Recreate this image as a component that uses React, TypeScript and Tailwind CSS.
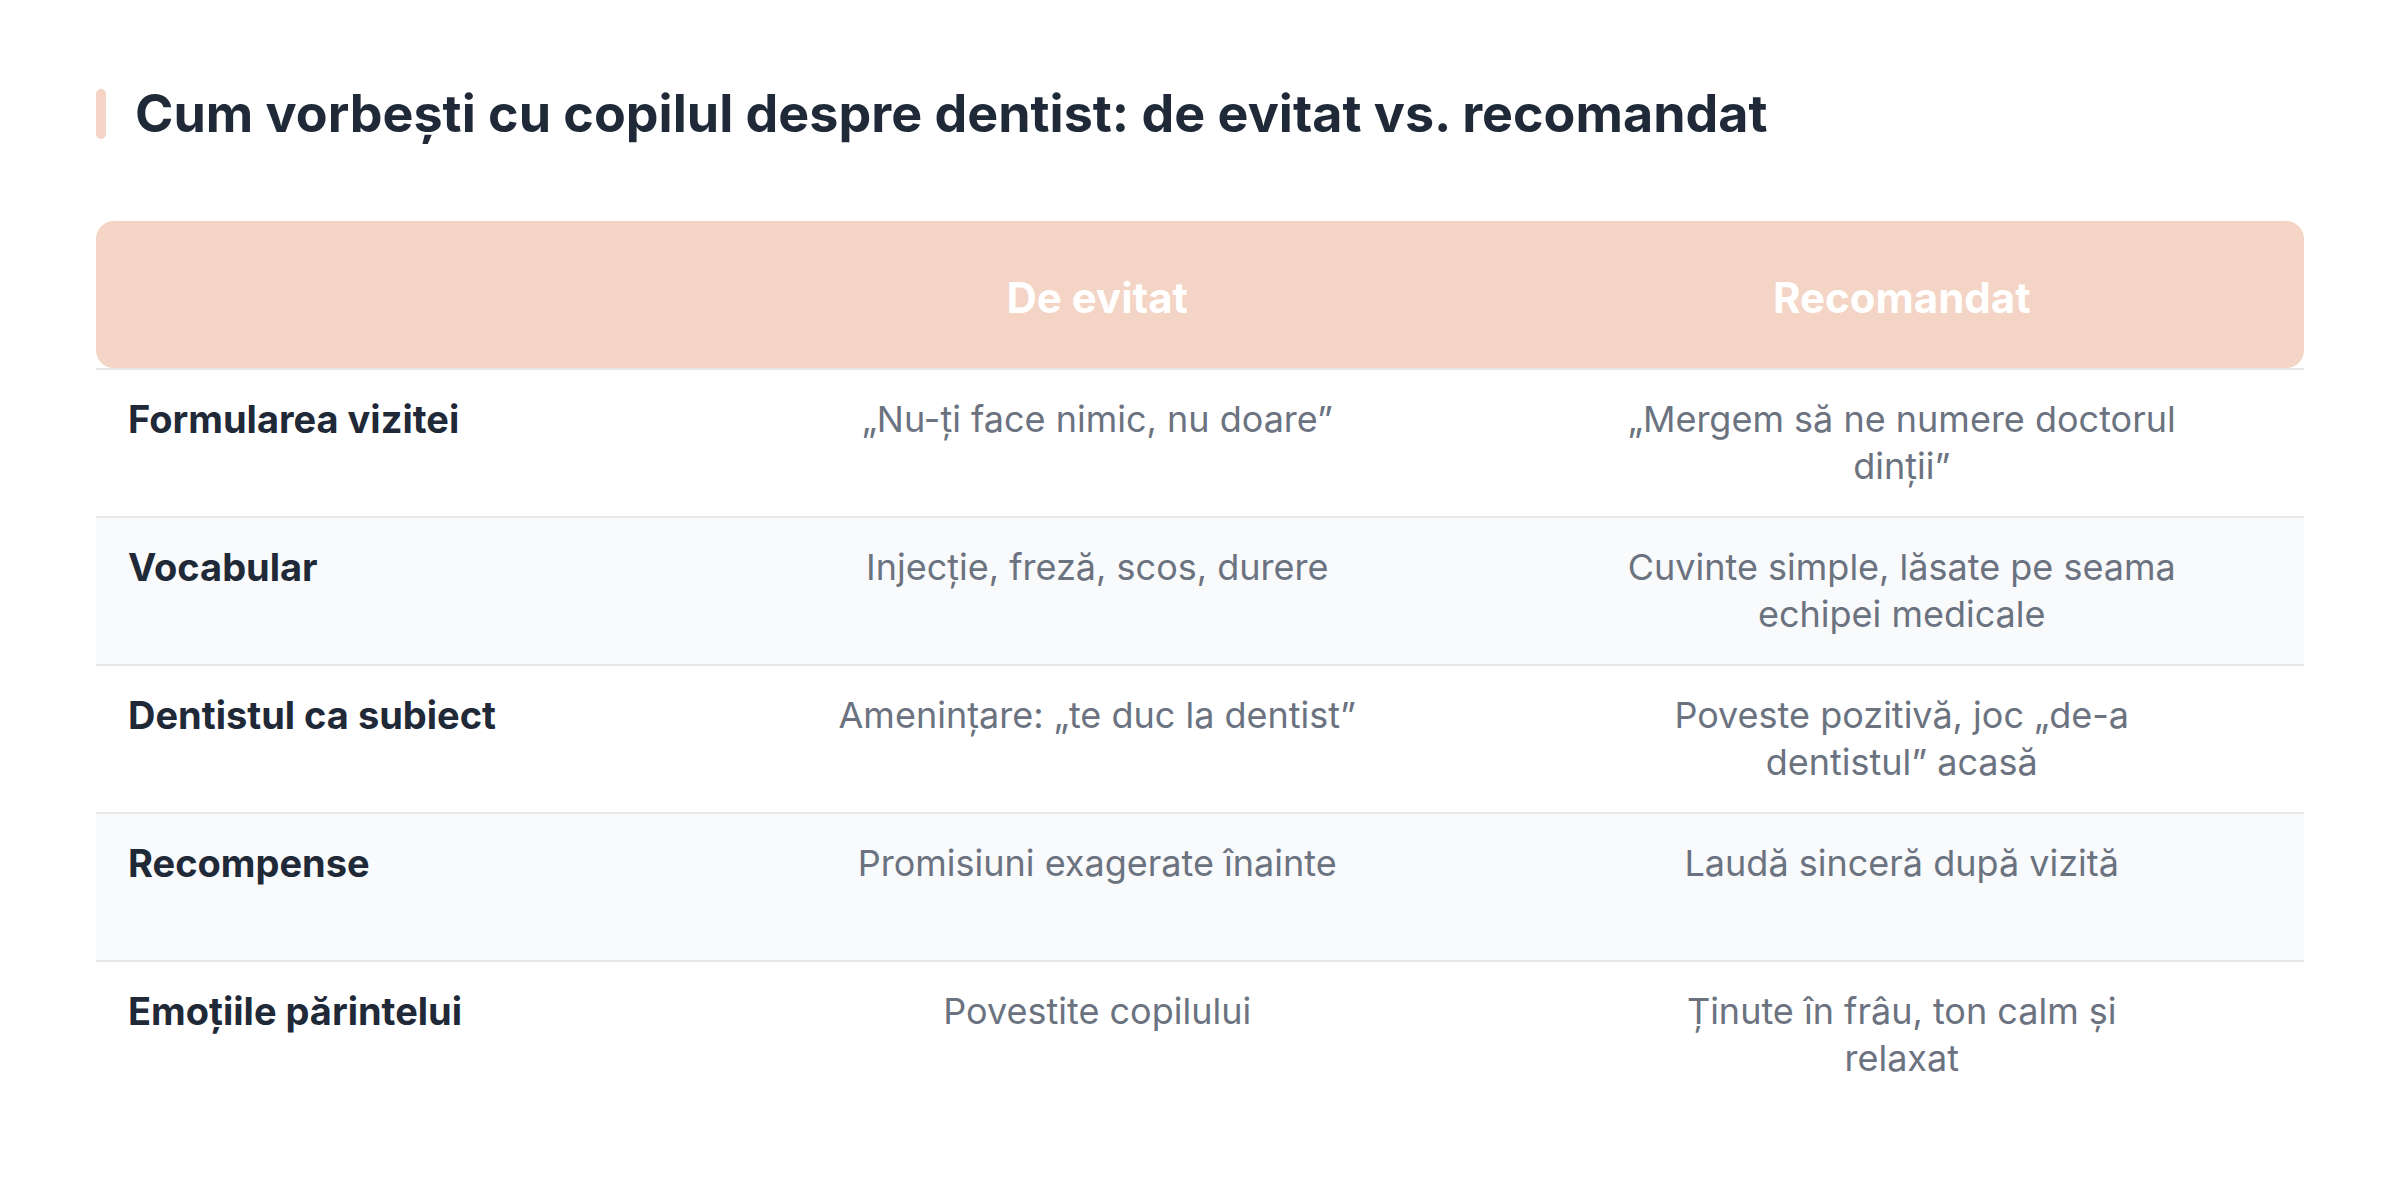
const rows = [
  {
    label: "Formularea vizitei",
    avoid: "„Nu-ți face nimic, nu doare”",
    recommended: "„Mergem să ne numere doctorul dinții”",
  },
  {
    label: "Vocabular",
    avoid: "Injecție, freză, scos, durere",
    recommended: "Cuvinte simple, lăsate pe seama echipei medicale",
  },
  {
    label: "Dentistul ca subiect",
    avoid: "Amenințare: „te duc la dentist”",
    recommended: "Poveste pozitivă, joc „de-a dentistul” acasă",
  },
  {
    label: "Recompense",
    avoid: "Promisiuni exagerate înainte",
    recommended: "Laudă sinceră după vizită",
  },
  {
    label: "Emoțiile părintelui",
    avoid: "Povestite copilului",
    recommended: "Ținute în frâu, ton calm și relaxat",
  },
];

export default function App() {
  return (
    <div className="min-h-screen bg-white px-[96px] pt-[88px] font-['Inter',sans-serif]">
      <div className="flex items-center gap-[29px]">
        <div className="w-[10px] h-[50px] rounded-full bg-[#f3d4c5]" />
        <h1 className="text-[52px] font-bold text-[#1f2937] leading-none">
          Cum vorbești cu copilul despre dentist: de evitat vs. recomandat
        </h1>
      </div>

      <div className="mt-[81px]">
        <div className="grid grid-cols-[599px_1fr_1fr] h-[147px] items-center rounded-[18px] bg-[#f3d4c5] pt-[6px] text-white font-bold text-[42px]">
          <div />
          <div className="text-center">De evitat</div>
          <div className="text-center">Recomandat</div>
        </div>

        {rows.map((row, i) => (
          <div
            key={row.label}
            className={`grid grid-cols-[599px_1fr_1fr] h-[148px] border-t-2 border-[#e5e7eb] leading-[47px] ${
              i % 2 === 1 ? "bg-[#f9fafb]" : "bg-white"
            }`}
          >
            <div className="px-[32px] pt-[26px] text-[38px] font-bold text-[#1f2937]">{row.label}</div>
            <div className="px-[32px] pt-[26px] text-center text-[36px] text-[#6b7280]">{row.avoid}</div>
            <div className="px-[32px] pt-[26px] text-center text-[36px] text-[#6b7280]">
              <div className="mx-auto max-w-[552px]">{row.recommended}</div>
            </div>
          </div>
        ))}
      </div>
    </div>
  );
}
